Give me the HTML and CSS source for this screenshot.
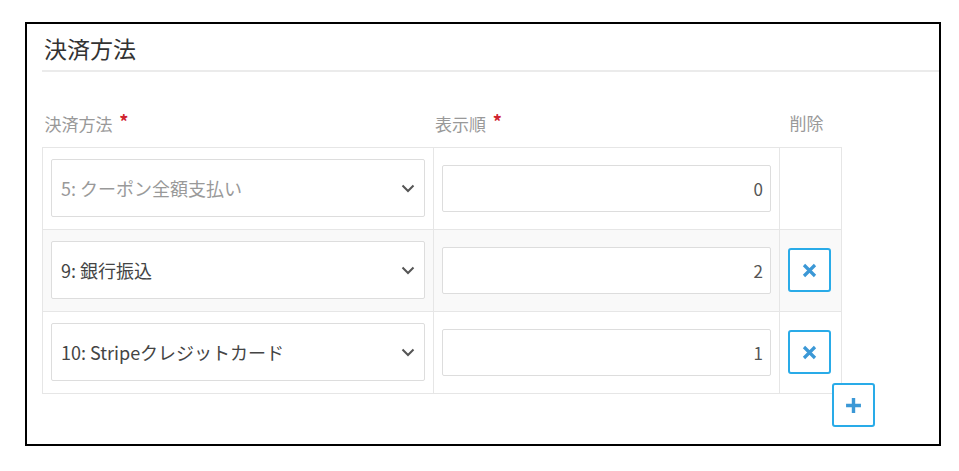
FILE: index.html
```html
<!DOCTYPE html>
<html lang="ja">
<head>
  <meta charset="utf-8">
  <meta name="viewport" content="width=device-width, initial-scale=1">
  <title>決済方法</title>
  <link rel="stylesheet" href="styles.css">
</head>
<body>
  <section class="card">
    <h2 class="card-title">決済方法</h2>

    <div class="card-body">
      <table class="payment-table">
        <thead>
          <tr>
            <th class="col-method">決済方法 <span class="required">*</span></th>
            <th class="col-order">表示順 <span class="required">*</span></th>
            <th class="col-delete">削除</th>
          </tr>
        </thead>
        <tbody>
          <tr>
            <td>
              <div class="select is-disabled">
                <span>5: クーポン全額支払い</span>
                <svg class="chevron" viewBox="0 0 14 9" width="14" height="9"><path d="M1.5 1.5 7 7l5.5-5.5" /></svg>
              </div>
            </td>
            <td><input class="order-input" type="text" value="0"></td>
            <td></td>
          </tr>
          <tr class="row-alt">
            <td>
              <div class="select">
                <span>9: 銀行振込</span>
                <svg class="chevron" viewBox="0 0 14 9" width="14" height="9"><path d="M1.5 1.5 7 7l5.5-5.5" /></svg>
              </div>
            </td>
            <td><input class="order-input" type="text" value="2"></td>
            <td>
              <button class="icon-button" type="button" aria-label="削除">
                <svg viewBox="0 0 15 15" width="15" height="15"><path d="M2 2l11 11M13 2 2 13" /></svg>
              </button>
            </td>
          </tr>
          <tr>
            <td>
              <div class="select">
                <span>10: Stripeクレジットカード</span>
                <svg class="chevron" viewBox="0 0 14 9" width="14" height="9"><path d="M1.5 1.5 7 7l5.5-5.5" /></svg>
              </div>
            </td>
            <td><input class="order-input" type="text" value="1"></td>
            <td>
              <button class="icon-button" type="button" aria-label="削除">
                <svg viewBox="0 0 15 15" width="15" height="15"><path d="M2 2l11 11M13 2 2 13" /></svg>
              </button>
            </td>
          </tr>
        </tbody>
      </table>

      <div class="add-row">
        <button class="icon-button" type="button" aria-label="追加">
          <svg viewBox="0 0 16 16" width="17" height="17"><path d="M8 1v14M1 8h14" /></svg>
        </button>
      </div>
    </div>
  </section>
</body>
</html>
```

FILE: styles.css
```css
:root {
  --text-color: #333333;
  --muted-color: #999999;
  --border-color: #e6e6e6;
  --input-border: #dddddd;
  --accent-color: #29abe8;
  --icon-color: #3b98d6;
  --required-color: #d0232f;
}

* {
  margin: 0;
  padding: 0;
  box-sizing: border-box;
}

body {
  font-family: "Noto Sans CJK JP", "Noto Sans", sans-serif;
  background: #ffffff;
  color: var(--text-color);
  padding: 22px 0 0 25px;
}

.card {
  width: 916px;
  height: 424px;
  border: 2px solid #000000;
  background: #ffffff;
}

.card-title {
  margin-left: 15px;
  padding: 9px 0 7px 2px;
  font-size: 23px;
  line-height: 30px;
  font-weight: 400;
  color: var(--text-color);
  border-bottom: 2px solid #ebebeb;
}

.card-body {
  padding: 38px 0 0 15px;
}

.payment-table {
  border-collapse: collapse;
  width: 800px;
}

.payment-table th {
  text-align: left;
  font-weight: 400;
  font-size: 17px;
  line-height: 22px;
  color: var(--muted-color);
  padding: 0 2px 12px;
}

.payment-table th.col-delete {
  padding-left: 10px;
}

.col-method { width: 391px; }
.col-order { width: 347px; }
.col-delete { width: 62px; }

.required {
  color: var(--required-color);
  font-weight: 700;
  font-size: 18px;
  vertical-align: 2px;
  margin-left: 3px;
}

.payment-table td {
  border: 1px solid var(--border-color);
  padding: 11px 8px 12px;
  vertical-align: middle;
}

.row-alt td {
  background: #f9f9f9;
}

.select {
  height: 58px;
  display: flex;
  align-items: center;
  justify-content: space-between;
  padding: 0 9px 0 9px;
  border: 1px solid var(--input-border);
  border-radius: 2px;
  background: #ffffff;
  font-size: 18px;
  color: #444444;
}

.select.is-disabled {
  color: var(--muted-color);
}

.chevron path {
  fill: none;
  stroke: #555555;
  stroke-width: 2;
}

.order-input {
  width: 100%;
  height: 47px;
  border: 1px solid var(--input-border);
  border-radius: 2px;
  padding: 0 7px;
  text-align: right;
  font-family: inherit;
  font-size: 17px;
  color: #555555;
  background: #ffffff;
}

.icon-button {
  width: 43px;
  height: 44px;
  display: flex;
  align-items: center;
  justify-content: center;
  border: 2px solid var(--accent-color);
  border-radius: 3px;
  background: #ffffff;
  cursor: pointer;
}

.icon-button path {
  fill: none;
  stroke: var(--icon-color);
  stroke-width: 3.2;
}

.add-row {
  width: 833px;
  display: flex;
  justify-content: flex-end;
  margin-top: -11px;
}
```
